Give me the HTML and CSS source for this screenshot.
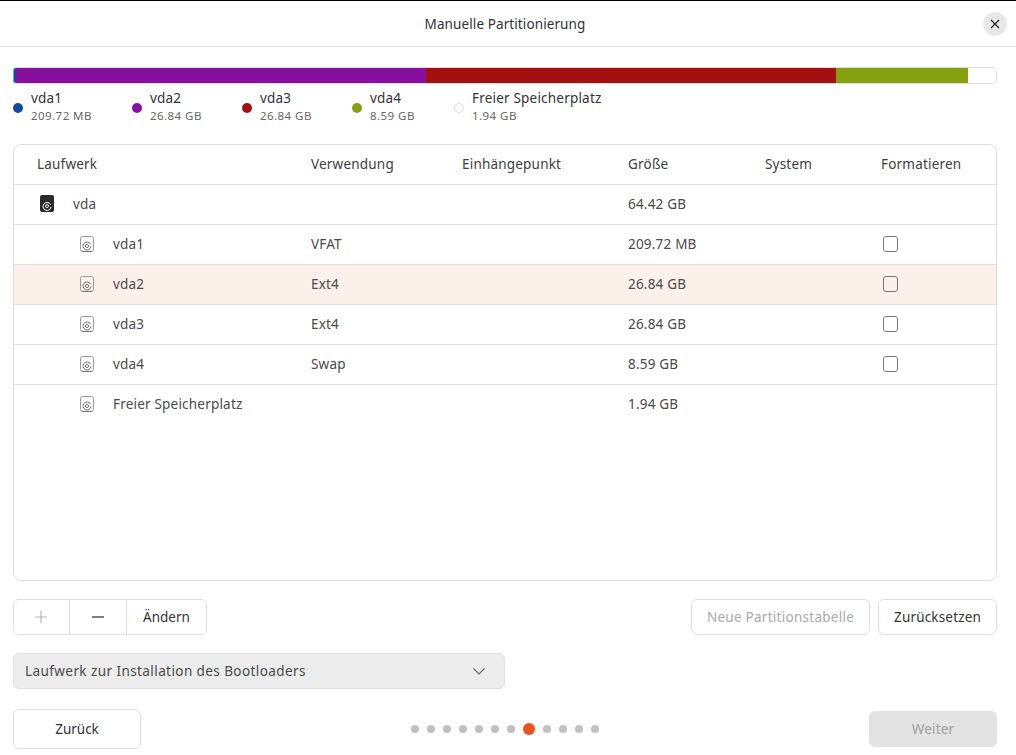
FILE: index.html
```html
<!DOCTYPE html>
<html lang="de">
<head>
  <meta charset="UTF-8">
  <title>Manuelle Partitionierung</title>
  <link rel="stylesheet" href="styles.css">
</head>
<body>
  <svg class="icon-defs" width="0" height="0">
    <symbol id="disk" viewBox="0 0 14 16">
      <rect x="0.5" y="0.5" width="13" height="15" rx="2" fill="none" stroke="#9a9a9a"/>
      <path d="M2 15.5h10" stroke="#777" fill="none"/>
      <path d="M10.6 8.2A4 4 0 1 0 11 10.5" fill="none" stroke="#666"/>
      <circle cx="7" cy="10" r="1.6" fill="none" stroke="#666" stroke-width="0.9"/>
    </symbol>
  </svg>

  <header class="titlebar">
    <span class="title">Manuelle Partitionierung</span>
    <button class="close">
      <svg width="10" height="10" viewBox="0 0 10 10"><path d="M1 1l8 8M9 1l-8 8" stroke="#222" stroke-width="1.3" fill="none"/></svg>
    </button>
  </header>

  <main class="content">
    <div class="usage-bar">
      <div class="seg seg-vda1"></div>
      <div class="seg seg-vda2"></div>
      <div class="seg seg-vda3"></div>
      <div class="seg seg-vda4"></div>
    </div>

    <div class="legend">
      <div class="legend-item item-1"><span class="dot dot-blue"></span><div><div class="legend-name">vda1</div><div class="legend-size">209.72 MB</div></div></div>
      <div class="legend-item item-2"><span class="dot dot-purple"></span><div><div class="legend-name">vda2</div><div class="legend-size">26.84 GB</div></div></div>
      <div class="legend-item item-3"><span class="dot dot-red"></span><div><div class="legend-name">vda3</div><div class="legend-size">26.84 GB</div></div></div>
      <div class="legend-item item-4"><span class="dot dot-green"></span><div><div class="legend-name">vda4</div><div class="legend-size">8.59 GB</div></div></div>
      <div class="legend-item"><span class="dot dot-free"></span><div><div class="legend-name">Freier Speicherplatz</div><div class="legend-size">1.94 GB</div></div></div>
    </div>

    <div class="table">
      <div class="row row-head">
        <span>Laufwerk</span><span>Verwendung</span><span>Einhängepunkt</span><span>Größe</span><span>System</span><span>Formatieren</span>
      </div>
      <div class="row">
        <span class="device"><span class="disk-solid"><svg width="10" height="10" viewBox="0 0 10 10"><path d="M8.6 3.6A4 4 0 1 0 9 6" fill="none" stroke="#fff"/><circle cx="5" cy="5" r="1.5" fill="none" stroke="#fff" stroke-width="0.9"/></svg></span>vda</span>
        <span></span><span></span><span>64.42 GB</span><span></span><span></span>
      </div>
      <div class="row">
        <span class="device child"><svg class="disk"><use href="#disk"/></svg>vda1</span>
        <span>VFAT</span><span></span><span>209.72 MB</span><span></span><span><i class="check"></i></span>
      </div>
      <div class="row selected">
        <span class="device child"><svg class="disk"><use href="#disk"/></svg>vda2</span>
        <span>Ext4</span><span></span><span>26.84 GB</span><span></span><span><i class="check"></i></span>
      </div>
      <div class="row">
        <span class="device child"><svg class="disk"><use href="#disk"/></svg>vda3</span>
        <span>Ext4</span><span></span><span>26.84 GB</span><span></span><span><i class="check"></i></span>
      </div>
      <div class="row">
        <span class="device child"><svg class="disk"><use href="#disk"/></svg>vda4</span>
        <span>Swap</span><span></span><span>8.59 GB</span><span></span><span><i class="check"></i></span>
      </div>
      <div class="row">
        <span class="device child"><svg class="disk"><use href="#disk"/></svg>Freier Speicherplatz</span>
        <span></span><span></span><span>1.94 GB</span><span></span><span></span>
      </div>
    </div>

    <div class="toolbar">
      <div class="btn-group">
        <button class="group-btn icon-btn btn-add">
          <svg width="12" height="12" viewBox="0 0 12 12"><path d="M6 0v12M0 6h12" stroke="#b5b5b5" stroke-width="1.2" fill="none"/></svg>
        </button>
        <button class="group-btn icon-btn btn-remove">
          <svg width="12" height="12" viewBox="0 0 12 12"><path d="M0 6h12" stroke="#555" stroke-width="1.6" fill="none"/></svg>
        </button>
        <button class="group-btn edit-btn">Ändern</button>
      </div>
      <div class="toolbar-right">
        <button class="btn new-table" disabled>Neue Partitionstabelle</button>
        <button class="btn reset">Zurücksetzen</button>
      </div>
    </div>

    <div class="combo">
      <span>Laufwerk zur Installation des Bootloaders</span>
      <svg width="12" height="7" viewBox="0 0 12 7"><path d="M0.5 0.5l5.5 5.5 5.5-5.5" stroke="#666" stroke-width="1.1" fill="none"/></svg>
    </div>

    <footer class="footer">
      <button class="btn back">Zurück</button>
      <div class="pager">
        <i></i><i></i><i></i><i></i><i></i><i></i><i></i><i class="active"></i><i></i><i></i><i></i><i></i>
      </div>
      <button class="btn next" disabled>Weiter</button>
    </footer>
  </main>
</body>
</html>
```

FILE: styles.css
```css
* {
  box-sizing: border-box;
}

body {
  margin: 0;
  height: 755px;
  overflow: hidden;
  background: #fff;
  color: #3d3d3d;
  font-family: "Noto Sans", sans-serif;
  font-size: 14px;
  border-top: 1px solid #000;
}

button {
  font: inherit;
  color: inherit;
  background: #fff;
}

.icon-defs {
  position: absolute;
}

.titlebar {
  height: 46px;
  padding-right: 6px;
  border-bottom: 1px solid #e3e3e3;
  position: relative;
  display: flex;
  align-items: center;
  justify-content: center;
}

.title {
  color: #333;
  font-size: 13.5px;
  letter-spacing: 0.1px;
}

.close {
  position: absolute;
  right: 9px;
  top: 11px;
  width: 24px;
  height: 24px;
  padding: 0;
  border: 0;
  border-radius: 50%;
  background: #e8e8e8;
  display: flex;
  align-items: center;
  justify-content: center;
}

.content {
  padding: 20px 19px 0 13px;
}

.usage-bar {
  height: 17px;
  display: flex;
  border: 1px solid #dcdcdc;
  border-left-color: #7f9fd0;
  border-radius: 3px 5px 5px 3px;
  overflow: hidden;
}

.seg-vda1 { width: 2px; background: #0e4aa5; }
.seg-vda2 { width: 410px; background: #870f9e; }
.seg-vda3 { width: 410px; background: #a30e0e; }
.seg-vda4 { width: 132px; background: #85a00c; }

.legend {
  display: flex;
  height: 36px;
  margin-top: 4px;
  margin-bottom: 20px;
}

.legend-item {
  display: flex;
  align-items: center;
  gap: 8px;
}

.item-1 { width: 119px; }
.item-2 { width: 110px; }
.item-3 { width: 110px; }
.item-4 { width: 102px; }

.legend-name {
  font-size: 13.5px;
  line-height: 19px;
  letter-spacing: 0.2px;
  color: #333;
}

.legend-size {
  font-size: 11.5px;
  line-height: 16px;
  letter-spacing: 0.45px;
  color: #666;
}

.dot {
  width: 10px;
  height: 10px;
  border-radius: 50%;
  margin-top: 3px;
}

.dot-blue { background: #0e4aa5; }
.dot-purple { background: #870f9e; }
.dot-red { background: #a30e0e; }
.dot-green { background: #85a00c; }
.dot-free { background: #fff; border: 1px solid #dcdcdc; }

.table {
  height: 437px;
  border: 1px solid #dedede;
  border-radius: 8px;
  overflow: hidden;
}

.row {
  height: 40px;
  display: grid;
  grid-template-columns: 274px 151px 166px 137px 116px 1fr;
  align-items: center;
  padding-left: 23px;
  padding-bottom: 2px;
  border-bottom: 1px solid #dedede;
  font-size: 13.5px;
  letter-spacing: 0.2px;
  color: #4a4a4a;
}

.row:last-child {
  border-bottom: 0;
  height: 39px;
}

.row-head {
  color: #3d3d3d;
}

.selected {
  background: #fcf0ea;
}

.device {
  display: flex;
  align-items: center;
  gap: 19px;
  margin-left: 3px;
}

.device.child {
  margin-left: 43px;
  gap: 19px;
}

.disk-solid {
  width: 14px;
  height: 17px;
  border-radius: 2px;
  background: #2b2b2b;
  display: flex;
  align-items: center;
  justify-content: center;
  padding-top: 4px;
}

.disk {
  width: 14px;
  height: 16px;
}

.check {
  display: block;
  width: 15px;
  height: 16px;
  margin-left: 2px;
  border: 1px solid #767676;
  border-radius: 3px;
}

.toolbar {
  display: flex;
  justify-content: space-between;
  margin-top: 18px;
}

.btn-group {
  display: flex;
  height: 36px;
  border: 1px solid #dedede;
  border-radius: 6px;
  overflow: hidden;
}

.group-btn {
  border: 0;
  border-right: 1px solid #dedede;
  padding: 0;
  display: flex;
  align-items: center;
  justify-content: center;
  font-size: 13.5px;
}

.btn-add {
  width: 56px;
  padding-right: 2px;
}

.btn-remove {
  width: 57px;
}

.edit-btn {
  width: 79px;
  border-right: 0;
  color: #333;
}

.toolbar-right {
  display: flex;
  gap: 8px;
}

.btn {
  height: 36px;
  border: 1px solid #dedede;
  border-radius: 6px;
  padding: 0;
  font-size: 13.5px;
  color: #333;
}

.new-table {
  width: 179px;
  letter-spacing: 0.27px;
  color: #a9a9a9;
}

.reset {
  width: 119px;
  letter-spacing: 0.17px;
}

.combo {
  width: 492px;
  height: 36px;
  margin-top: 18px;
  padding: 0 19px 0 11px;
  display: flex;
  align-items: center;
  justify-content: space-between;
  background: #ececec;
  border: 1px solid #e0e0e0;
  border-radius: 6px;
  font-size: 13.5px;
  letter-spacing: 0.42px;
  color: #4a4a4a;
}

.footer {
  display: flex;
  align-items: center;
  justify-content: space-between;
  margin-top: 20px;
  height: 40px;
}

.back {
  width: 128px;
  height: 40px;
}

.next {
  width: 128px;
  height: 36px;
  border: 0;
  background: #e3e3e3;
  letter-spacing: 0.2px;
  color: #a0a0a0;
}

.pager {
  display: flex;
  align-items: center;
  gap: 8px;
}

.pager i {
  width: 8px;
  height: 8px;
  border-radius: 50%;
  background: #c0c0c0;
}

.pager i.active {
  width: 12px;
  height: 12px;
  background: #e95420;
}
```
